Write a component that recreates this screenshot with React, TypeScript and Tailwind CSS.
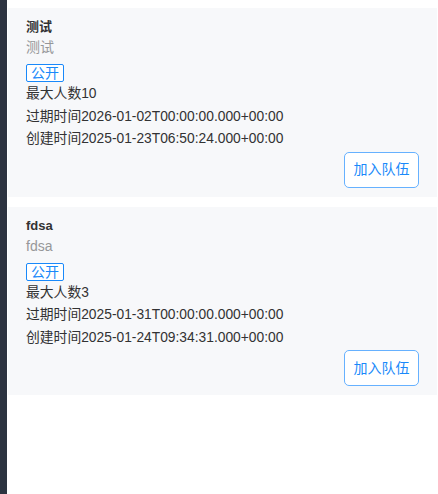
const teams = [
  {
    name: "测试",
    description: "测试",
    maxNum: 10,
    expireTime: "2026-01-02T00:00:00.000+00:00",
    createTime: "2025-01-23T06:50:24.000+00:00",
  },
  {
    name: "fdsa",
    description: "fdsa",
    maxNum: 3,
    expireTime: "2025-01-31T00:00:00.000+00:00",
    createTime: "2025-01-24T09:34:31.000+00:00",
  },
];

type Team = (typeof teams)[number];

const TeamCard: React.FC<{ team: Team }> = ({ team }) => {
  return (
    <div className="bg-[#f7f8fa] px-[18px] pt-2 pb-[9px] text-[14px] text-[#323233]">
      <div className="font-bold leading-[21px] text-[13px]">{team.name}</div>
      <div className="leading-[21px] text-[#969799]">{team.description}</div>
      <div className="mt-[6px] flex">
        <span className="h-[18px] px-[4px] border border-[#1989fa] rounded-[2px] text-[#1989fa] leading-[16px] bg-white">
          公开
        </span>
      </div>
      <div className="mt-[1px] leading-[22.5px] text-[13.8px]">
        <p>最大人数{team.maxNum}</p>
        <p>过期时间{team.expireTime}</p>
        <p>创建时间{team.createTime}</p>
      </div>
      <div className="mt-[1px] flex justify-end">
        <button
          onClick={(e) => {
            e.preventDefault();
          }}
          className="h-[36px] w-[75px] rounded-[5px] border border-[#66b1ff] bg-white text-[#1989fa] text-[14px]"
        >
          加入队伍
        </button>
      </div>
    </div>
  );
};

export default function App() {
  return (
    <div
      className="flex h-[494px] w-[438px] bg-white"
      style={{ fontFamily: '"Liberation Sans", "Noto Sans CJK SC", sans-serif' }}
    >
      <div className="w-[7px] shrink-0 bg-[#2c3340]"></div>
      <div className="flex-1 flex flex-col gap-[10px] pt-2 px-[1px]">
        {teams.map((team) => (
          <TeamCard key={team.name} team={team} />
        ))}
      </div>
    </div>
  );
}
